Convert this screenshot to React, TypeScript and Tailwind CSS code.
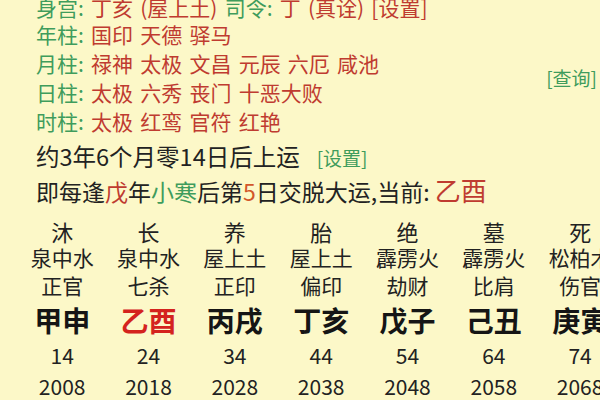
const GREEN = 'text-[#3f9c5c]'
const RED = 'text-[#bf3b30]'

const pillars = [
  { label: '年柱', items: ['国印', '天德', '驿马'] },
  { label: '月柱', items: ['禄神', '太极', '文昌', '元辰', '六厄', '咸池'] },
  { label: '日柱', items: ['太极', '六秀', '丧门', '十恶大败'] },
  { label: '时柱', items: ['太极', '红鸾', '官符', '红艳'] },
]

const dayun = [
  { stage: '沐', nayin: '泉中水', god: '正官', gz: '甲申', age: 14, year: 2008 },
  { stage: '长', nayin: '泉中水', god: '七杀', gz: '乙酉', age: 24, year: 2018, current: true },
  { stage: '养', nayin: '屋上土', god: '正印', gz: '丙戌', age: 34, year: 2028 },
  { stage: '胎', nayin: '屋上土', god: '偏印', gz: '丁亥', age: 44, year: 2038 },
  { stage: '绝', nayin: '霹雳火', god: '劫财', gz: '戊子', age: 54, year: 2048 },
  { stage: '墓', nayin: '霹雳火', god: '比肩', gz: '己丑', age: 64, year: 2058 },
  { stage: '死', nayin: '松柏木', god: '伤官', gz: '庚寅', age: 74, year: 2068 },
]

export default function App() {
  return (
    <div
      className="w-[600px] h-[400px] overflow-hidden bg-[#fcf8c8] text-[#222]"
      style={{ fontFamily: '"Noto Sans CJK SC", "Noto Sans", sans-serif' }}
    >
      {/* 神煞 */}
      <div className="flex justify-between pl-[36px] pr-[3px] mt-[-9px]">
        <div className="text-[21px] leading-[29px] [word-spacing:2.5px]">
          <div className="whitespace-nowrap pt-[2px] h-[29px]">
            <span className={GREEN}>身宫: </span>
            <span className={RED}>丁亥 (屋上土) </span>
            <span className={GREEN}>司令: </span>
            <span className={RED}>丁 (真诠) [设置]</span>
          </div>
          {pillars.map(p => (
            <div key={p.label} className="whitespace-nowrap">
              <span className={GREEN}>{p.label}: </span>
              <span className={RED}>{p.items.join(' ')}</span>
            </div>
          ))}
        </div>
        <div className={`mt-[75px] text-[19px] leading-[24px] ${GREEN}`}>[查询]</div>
      </div>

      {/* 起运 */}
      <div className="pl-[36px] mt-[4px] text-[23px] leading-[32px] whitespace-nowrap">
        <div>
          <span className="text-[23.5px]">约3年6个月零14日后上运</span>
          <span className={`ml-[17px] text-[19px] ${GREEN}`}>[设置]</span>
        </div>
        <div>
          即每逢<span className={RED}>戊</span>年<span className={GREEN}>小寒</span>后第
          <span className="text-[#d2562a]">5</span>日交脱大运,当前:{' '}
          <span className={`text-[26px] ${RED}`}>乙酉</span>
        </div>
      </div>

      {/* 大运 */}
      <div className="flex pl-[19px] mt-[13px]">
        {dayun.map(d => (
          <div key={d.gz} className="w-[86.33px] shrink-0 flex flex-col items-center whitespace-nowrap">
            <div className="h-[22px] leading-[22px] text-[22px]">{d.stage}</div>
            <div className="h-[30px] leading-[30px] text-[21px]">{d.nayin}</div>
            <div className="h-[26px] leading-[26px] text-[21px]">{d.god}</div>
            <div
              className={`h-[44px] leading-[44px] text-[28px] font-bold ${d.current ? 'text-[#d4231e]' : 'text-[#151515]'}`}
            >
              {d.gz}
            </div>
            <div className="h-[26px] leading-[26px] text-[21px]">{d.age}</div>
            <div className="h-[36px] leading-[36px] text-[21px]">{d.year}</div>
          </div>
        ))}
      </div>
    </div>
  )
}
